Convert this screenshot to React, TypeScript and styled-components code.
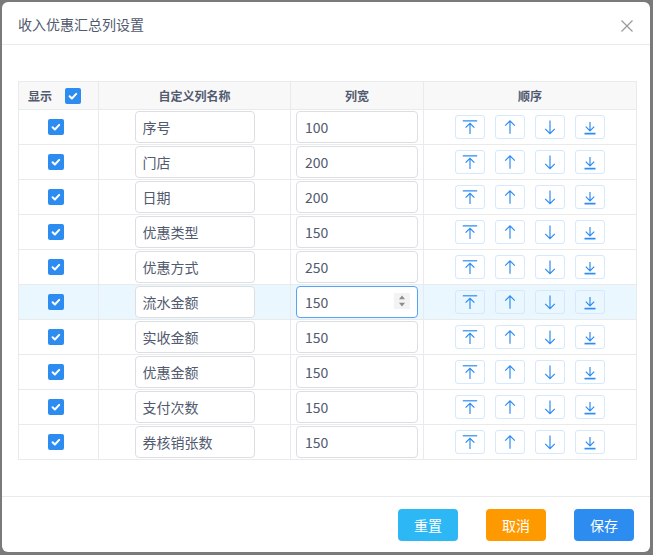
import React from 'react';
import styled, { createGlobalStyle } from 'styled-components';

const GlobalStyle = createGlobalStyle`
    html, body {
        margin: 0;
        padding: 0;
        background: #7a7a7a;
    }
    * {
        box-sizing: border-box;
    }
    body {
        font-family: "Noto Sans CJK SC", "Noto Sans", sans-serif;
    }
`

type TColumn = {
    name: string;
    width: number;
};

const columns: TColumn[] = [
    { name: '序号', width: 100 },
    { name: '门店', width: 200 },
    { name: '日期', width: 200 },
    { name: '优惠类型', width: 150 },
    { name: '优惠方式', width: 250 },
    { name: '流水金额', width: 150 },
    { name: '实收金额', width: 150 },
    { name: '优惠金额', width: 150 },
    { name: '支付次数', width: 150 },
    { name: '券核销张数', width: 150 },
];

const ACTIVE_ROW = 5;

const CheckMark = () => (
    <CheckBox>
        <svg width="16" height="16" viewBox="0 0 16 16">
            <path d="M4.6 8.2l2.3 2.3 4.3-4.6" fill="none" stroke="#fff" strokeWidth="2" strokeLinecap="round" strokeLinejoin="round" />
        </svg>
    </CheckBox>
);

const IconTop = () => (
    <svg width="16" height="16" viewBox="0 0 16 16" fill="none" stroke="#2d8cf0" strokeWidth="1.2">
        <path d="M0.8 1.8H15.2" />
        <path d="M8 15V4.3M3.6 8.7L8 4.3l4.4 4.4" />
    </svg>
);

const IconUp = () => (
    <svg width="16" height="16" viewBox="0 0 16 16" fill="none" stroke="#2d8cf0" strokeWidth="1.2">
        <path d="M8 14.8V1.8M3.2 6.6L8 1.8l4.8 4.8" />
    </svg>
);

const IconDown = () => (
    <svg width="16" height="16" viewBox="0 0 16 16" fill="none" stroke="#2d8cf0" strokeWidth="1.2">
        <path d="M8 1.6V14.6M3.2 9.8L8 14.6l4.8-4.8" />
    </svg>
);

const IconBottom = () => (
    <svg width="16" height="16" viewBox="0 0 16 16" fill="none" stroke="#2d8cf0">
        <path d="M8 3v8.8M3.8 7.6L8 11.8l4.2-4.2" strokeWidth="1.2" />
        <path d="M2.5 14.6H13.5" strokeWidth="1.7" />
    </svg>
);

export default function App() {
    return (
        <>
            <GlobalStyle />
            <Backdrop>
                <Modal>
                    <Header>
                        <Title>收入优惠汇总列设置</Title>
                        <CloseButton>
                            <svg width="14" height="14" viewBox="0 0 14 14" fill="none" stroke="#999" strokeWidth="1.2">
                                <path d="M1.5 1.5l11 11M12.5 1.5l-11 11" />
                            </svg>
                        </CloseButton>
                    </Header>
                    <Body>
                        <Table>
                            <HeadRow>
                                <HeadCell $align="left">
                                    显示
                                    <HeadCheck><CheckMark /></HeadCheck>
                                </HeadCell>
                                <HeadCell>自定义列名称</HeadCell>
                                <HeadCell>列宽</HeadCell>
                                <HeadCell>顺序</HeadCell>
                            </HeadRow>
                            {columns.map((col, i) => (
                                <Row key={col.name} $active={i === ACTIVE_ROW}>
                                    <Cell>
                                        <RowCheck><CheckMark /></RowCheck>
                                    </Cell>
                                    <Cell>
                                        <NameInput readOnly value={col.name} />
                                    </Cell>
                                    <Cell>
                                        <NumberWrap>
                                            <WidthInput readOnly value={col.width} $focused={i === ACTIVE_ROW} />
                                            {i === ACTIVE_ROW && (
                                                <Spinner>
                                                    <svg width="16" height="16" viewBox="0 0 16 16">
                                                        <path d="M5 6.2L8 2.6l3 3.6z" fill="#8c8c8c" />
                                                        <path d="M5 9.8L8 13.4l3-3.6z" fill="#8c8c8c" />
                                                    </svg>
                                                </Spinner>
                                            )}
                                        </NumberWrap>
                                    </Cell>
                                    <Cell>
                                        <OrderGroup>
                                            <OrderButton><IconTop /></OrderButton>
                                            <OrderButton><IconUp /></OrderButton>
                                            <OrderButton><IconDown /></OrderButton>
                                            <OrderButton><IconBottom /></OrderButton>
                                        </OrderGroup>
                                    </Cell>
                                </Row>
                            ))}
                        </Table>
                    </Body>
                    <Footer>
                        <ActionButton $color="#2db7f5">重置</ActionButton>
                        <ActionButton $color="#ff9900">取消</ActionButton>
                        <ActionButton $color="#2d8cf0">保存</ActionButton>
                    </Footer>
                </Modal>
            </Backdrop>
        </>
    );
}

const Backdrop = styled.div`
    width: 653px;
    height: 555px;
    padding: 2px 3px 3px 2px;
    background: #7a7a7a;
`
const Modal = styled.div`
    display: flex;
    flex-direction: column;
    width: 648px;
    height: 550px;
    background: #fff;
    border-radius: 6px;
    overflow: hidden;
`
const Header = styled.div`
    display: flex;
    justify-content: space-between;
    align-items: flex-start;
    padding: 12px 16px 10px 16px;
    border-bottom: 1px solid #e8eaec;
`
const Title = styled.div`
    font-size: 14px;
    line-height: 20px;
    color: #515a6e;
`
const CloseButton = styled.div`
    display: flex;
    width: 14px;
    height: 14px;
    margin-top: 5px;
    cursor: pointer;
`
const Body = styled.div`
    flex: 1;
    padding: 36px 14px 0 16px;
`
const Table = styled.div`
    display: flex;
    flex-direction: column;
    width: 619px;
    border-top: 1px solid #e8eaec;
    border-left: 1px solid #e8eaec;
`
const HeadRow = styled.div`
    display: grid;
    grid-template-columns: 80px 192px 133px 213px;
    background: #f8f8f9;
`
const HeadCell = styled.div<{ $align?: 'left' }>`
    display: flex;
    align-items: center;
    justify-content: ${p => (p.$align === 'left' ? 'flex-start' : 'center')};
    height: 28px;
    padding-left: ${p => (p.$align === 'left' ? '9px' : '0')};
    font-size: 12px;
    font-weight: 700;
    color: #515a6e;
    border-right: 1px solid #e8eaec;
    border-bottom: 1px solid #e8eaec;
`
const HeadCheck = styled.span`
    display: flex;
    margin-left: 13px;
`
const Row = styled.div<{ $active?: boolean }>`
    display: grid;
    grid-template-columns: 80px 192px 133px 213px;
    background: ${p => (p.$active ? '#ebf7ff' : '#fff')};
`
const Cell = styled.div`
    display: flex;
    align-items: center;
    justify-content: center;
    height: 35px;
    border-right: 1px solid #e8eaec;
    border-bottom: 1px solid #e8eaec;
`
const RowCheck = styled.span`
    display: flex;
    margin-right: 6px;
`
const CheckBox = styled.span`
    display: flex;
    width: 16px;
    height: 16px;
    background: #2d8cf0;
    border-radius: 2px;
`
const NameInput = styled.input`
    width: 120px;
    height: 32px;
    padding: 0 7px;
    font-family: inherit;
    font-size: 14px;
    color: #515a6e;
    background: #fff;
    border: 1px solid #dcdee2;
    border-radius: 4px;
    outline: none;
`
const NumberWrap = styled.div`
    position: relative;
    display: flex;
`
const WidthInput = styled.input<{ $focused?: boolean }>`
    width: 122px;
    height: 32px;
    padding: 0 8px;
    font-family: inherit;
    font-size: 14px;
    color: #515a6e;
    background: #fff;
    border: 1px solid ${p => (p.$focused ? '#57a3f3' : '#dcdee2')};
    border-radius: 4px;
    outline: none;
`
const Spinner = styled.span`
    position: absolute;
    top: 7px;
    right: 8px;
    display: flex;
    width: 16px;
    height: 16px;
    background: #f3f3f3;
`
const OrderGroup = styled.div`
    display: flex;
    gap: 10px;
`
const OrderButton = styled.button`
    display: flex;
    align-items: center;
    justify-content: center;
    width: 30px;
    height: 24px;
    padding: 0;
    background: transparent;
    border: 1px solid #d5e8fc;
    border-radius: 3px;
    cursor: pointer;
`
const Footer = styled.div`
    display: flex;
    justify-content: flex-end;
    gap: 28px;
    padding: 12px 16px 11px 16px;
    border-top: 1px solid #e8eaec;
`
const ActionButton = styled.button<{ $color: string }>`
    width: 60px;
    height: 32px;
    padding: 0;
    font-family: inherit;
    font-size: 14px;
    color: #fff;
    background: ${p => p.$color};
    border: none;
    border-radius: 4px;
    cursor: pointer;
`
